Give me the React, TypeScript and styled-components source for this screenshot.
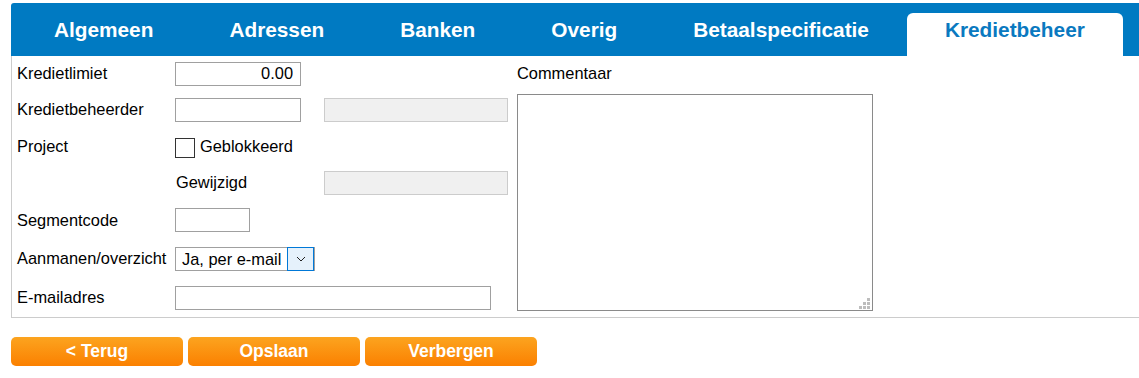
import React from "react";
import styled, { createGlobalStyle } from "styled-components";

const GlobalStyle = createGlobalStyle`
  body {
    margin: 0;
    background: #fff;
    font-family: "Liberation Sans", Arial, sans-serif;
    color: #000;
  }
`;

const Page = styled.div`
  padding: 3px 0 0 11px;
  overflow: hidden;
`;

const TabBar = styled.nav`
  display: flex;
  align-items: flex-end;
  height: 53px;
  padding-left: 5px;
  background: #007ac2;
  border-top-left-radius: 3px;
`;

const Tab = styled.div<{ active?: boolean }>`
  height: 43px;
  box-sizing: border-box;
  padding: 5px 38px 0;
  font-size: 20.8px;
  line-height: 24px;
  font-weight: bold;
  white-space: nowrap;
  color: ${({ active }) => (active ? "#0a79c0" : "#fff")};
  background: ${({ active }) => (active ? "#fff" : "transparent")};
  border-radius: 6px 6px 0 0;
`;

const Panel = styled.div`
  display: flex;
  border-left: 1px solid #ccc;
  border-bottom: 1px solid #ccc;
  padding-left: 5px;
`;

const FormGrid = styled.div`
  display: grid;
  grid-template-columns: 158px 149px 184px;
  grid-template-rows: 35px 37px 36px 37px 38px 39px 39px;
  align-items: center;
  font-size: 16.4px;
`;

const Label = styled.div<{ indent?: number }>`
  padding-left: ${({ indent }) => indent || 0}px;
  white-space: nowrap;
`;

const Field = styled.input<{ w: number; right?: boolean; span?: number }>`
  width: ${({ w }) => w}px;
  height: 24px;
  box-sizing: border-box;
  margin: 0;
  padding: 0 7px 0 5px;
  border: 1px solid #a0a0a0;
  font-family: inherit;
  font-size: 16.4px;
  color: #000;
  background: #fff;
  text-align: ${({ right }) => (right ? "right" : "left")};
  grid-column: ${({ span }) => (span ? `span ${span}` : "auto")};
  outline: none;

  &:disabled {
    background: #f0f0f0;
    border-color: #ccc;
  }
`;

const CheckRow = styled.label`
  display: flex;
  align-items: center;
  gap: 5px;
  white-space: nowrap;
`;

const CheckBox = styled.span`
  width: 20px;
  height: 20px;
  box-sizing: border-box;
  border: 1px solid #333;
  background: #fff;
  margin-top: 3px;
`;

const SelectBox = styled.div`
  display: flex;
  width: 140px;
  height: 24px;
  box-sizing: border-box;
  border: 1px solid #a0a0a0;
  background: #fff;
`;

const SelectValue = styled.div`
  flex: 1;
  padding-left: 6px;
  line-height: 22px;
  white-space: nowrap;
`;

const SelectButton = styled.div`
  width: 27px;
  margin: -1px 0;
  box-sizing: border-box;
  border: 1px solid #0078d7;
  background: #e5f1fb;
  display: flex;
  align-items: center;
  justify-content: center;
`;

const CommentColumn = styled.div`
  display: flex;
  flex-direction: column;
  margin-left: 9px;
  font-size: 16.4px;
`;

const CommentLabel = styled.div`
  height: 35px;
  line-height: 35px;
`;

const AreaWrap = styled.div`
  position: relative;
  width: 356px;
  height: 217px;
  margin-top: 3px;
`;

const CommentArea = styled.textarea`
  width: 100%;
  height: 100%;
  box-sizing: border-box;
  margin: 0;
  border: 1px solid #8a8a8a;
  resize: none;
  outline: none;
  font-family: inherit;
  font-size: 16px;
`;

const Grip = styled.svg`
  position: absolute;
  right: 3px;
  bottom: 2px;
`;

const ButtonRow = styled.div`
  display: flex;
  gap: 5px;
  margin-top: 19px;
`;

const OrangeButton = styled.button`
  width: 172px;
  height: 29px;
  padding: 0;
  border: none;
  border-radius: 5px;
  background: linear-gradient(#fca41f, #fb8000);
  color: #fff;
  font-family: inherit;
  font-size: 17.5px;
  font-weight: bold;
  line-height: 29px;
  cursor: pointer;
`;

const tabs = ["Algemeen", "Adressen", "Banken", "Overig", "Betaalspecificatie", "Kredietbeheer"];

const App = () => {
  return (
    <>
      <GlobalStyle />
      <Page>
        <TabBar>
          {tabs.map((t) => (
            <Tab key={t} active={t === "Kredietbeheer"}>
              {t}
            </Tab>
          ))}
        </TabBar>
        <Panel>
          <FormGrid>
            <Label>Kredietlimiet</Label>
            <Field w={126} right defaultValue="0.00" />
            <div />

            <Label>Kredietbeheerder</Label>
            <Field w={126} />
            <Field w={184} disabled />

            <Label>Project</Label>
            <CheckRow>
              <CheckBox />
              Geblokkeerd
            </CheckRow>
            <div />

            <div />
            <Label indent={1}>Gewijzigd</Label>
            <Field w={184} disabled />

            <Label>Segmentcode</Label>
            <Field w={75} />
            <div />

            <Label>Aanmanen/overzicht</Label>
            <SelectBox>
              <SelectValue>Ja, per e-mail</SelectValue>
              <SelectButton>
                <svg width="10" height="6" viewBox="0 0 10 6">
                  <path d="M1 1 L5 5 L9 1" fill="none" stroke="#222" strokeWidth="1" />
                </svg>
              </SelectButton>
            </SelectBox>
            <div />

            <Label>E-mailadres</Label>
            <Field w={316} span={2} />
          </FormGrid>
          <CommentColumn>
            <CommentLabel>Commentaar</CommentLabel>
            <AreaWrap>
              <CommentArea />
              <Grip width="11" height="11" viewBox="0 0 11 11">
                <g fill="#bdbdbd">
                  <rect x="8" y="0" width="3" height="3" />
                  <rect x="4" y="4" width="3" height="3" />
                  <rect x="8" y="4" width="3" height="3" />
                  <rect x="0" y="8" width="3" height="3" />
                  <rect x="4" y="8" width="3" height="3" />
                  <rect x="8" y="8" width="3" height="3" />
                </g>
              </Grip>
            </AreaWrap>
          </CommentColumn>
        </Panel>
        <ButtonRow>
          <OrangeButton>&lt; Terug</OrangeButton>
          <OrangeButton>Opslaan</OrangeButton>
          <OrangeButton>Verbergen</OrangeButton>
        </ButtonRow>
      </Page>
    </>
  );
};

export default App;
